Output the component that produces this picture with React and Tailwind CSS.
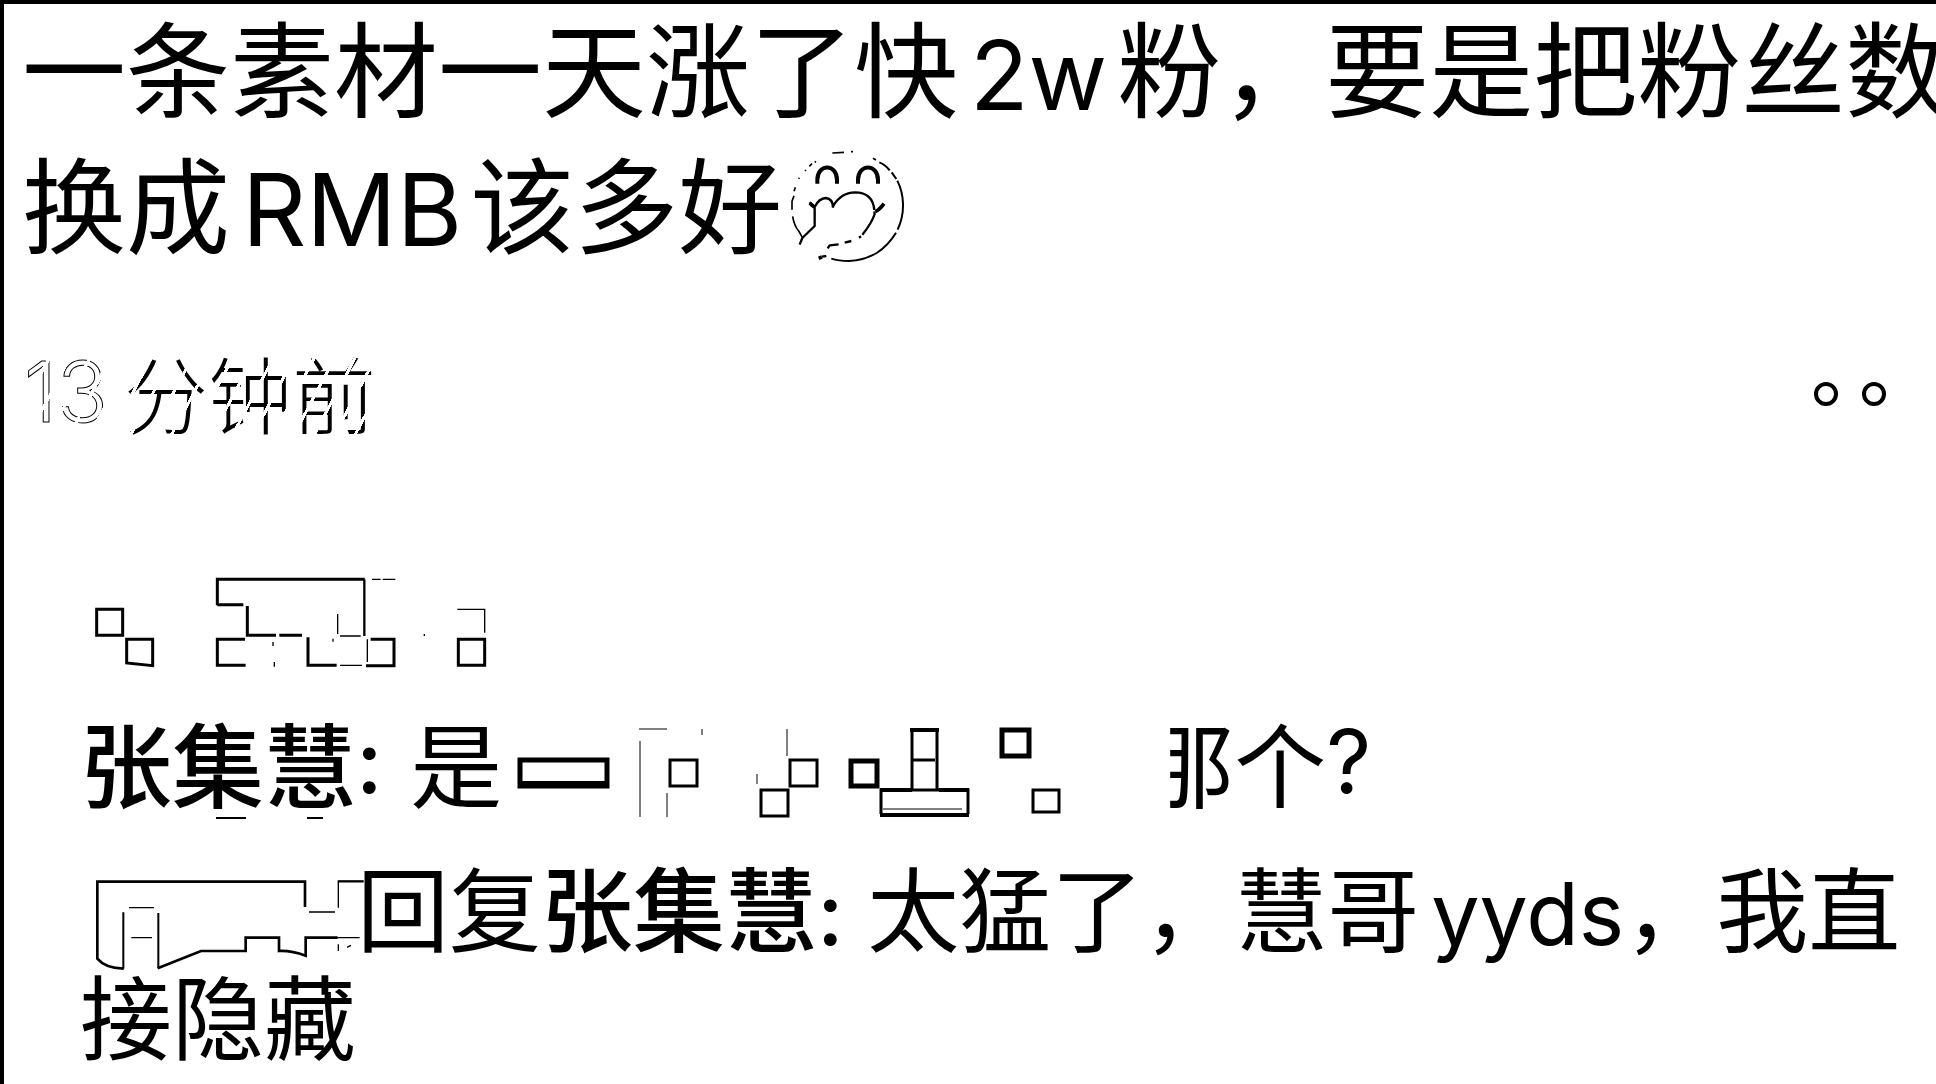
const CJK = "font-['Noto_Sans_CJK_SC',sans-serif]";
const LATIN = "font-['Inter','Noto_Sans_CJK_SC',sans-serif]";

function Latin({ className = "", children }) {
  return <span className={`${LATIN} ${className}`}>{children}</span>;
}

function Emoji() {
  return (
    <svg role="img" aria-label="捂嘴笑" viewBox="36 30 384 360" className="h-[120px] w-[128px] shrink-0" fill="none" stroke="black" strokeWidth="6" strokeLinejoin="round">
      <path d="M187 45 L222 43 M243 41h6 M309 61l9 5 M118 85l8-8 M134 73l4-3 M105 99l3-3 M86 122l2-3" strokeWidth="5" />
      <path d="M328 73 Q346 80 359 97 M365 103 L379 123 M382 128 Q398 160 399 198 Q400 238 383 275 M378 284 Q355 322 320 345 Q280 368 237 369 Q205 369 184 362" />
      <path d="M76 148 L72 160 M72 173 L66 190 L66 215 M68 235 Q72 262 86 279 L97 298" strokeWidth="5" />
      <path d="M142 137 V126 C142 76 201 76 201 126 V137 M264 137 V126 C264 76 324 76 324 126 V137" strokeWidth="12" />
      <path d="M119 193 L134 210 M134 207 Q147 181 167 180 Q189 182 189 209 M189 205 Q212 164 255 163 Q308 163 313 216 M313 220 L314 228 Q305 256 277 290 M273 295l-6 4" strokeWidth="7" />
      <path d="M134 208 V264 L97 300 L89 320" strokeWidth="7" />
      <path d="M119 195 L131 206 M316 221 Q328 216 342 197 M146 361 L156 357" strokeWidth="11" />
      <path d="M156 356 L169 354 M173 331 L179 322 L206 319 M224 314 L244 309" strokeWidth="7" />
    </svg>
  );
}

function AuthorMosaic() {
  return (
    <svg aria-hidden="true" viewBox="0 0 1290 360" className="h-[120px] w-[430px]" fill="none" stroke="black" strokeWidth="9">
      <path d="M50 148H128V226H50Z M140 238H218V317L140 309Z" />
      <path d="M412 136V58H854 M412 134H490 M502 138V226H588 M598 226H666 M495 238H412V316H497 M684 232V316H770 M858 317H942V238H872" />
      <path d="M853 58V228" strokeWidth="7" />
      <path d="M780 228H842 M773 222V162 M780 316H846 M862 238V306" strokeWidth="4" />
      <path d="M876 58H902 M908 58H946 M1132 148H1214V218 M1033 222v6 M579 246v12 M583 306v14 M759 236v9" strokeWidth="4" />
      <path d="M1135 238H1214V316H1135Z" />
    </svg>
  );
}

function CommentMosaic() {
  return (
    <svg aria-hidden="true" viewBox="501 712 640 108" className="h-[108px] w-[640px] shrink-0" fill="none" stroke="black" strokeWidth="3">
      <path d="M519 760H606V786H519Z" strokeWidth="5" />
      <path d="M518 784H605" strokeWidth="6" />
      <path d="M638 729H666 M639 741V817 M666 793V817 M701 729v6 M786 729V756 M756 774v10" strokeWidth="1" />
      <path d="M669 760H696V786H669Z M789 760H816V786H789Z M760 790H787V816H760Z M1032 790H1058V812H1032Z" />
      <path d="M850 761H876V786H850Z M1001 730H1028V756H1001Z" strokeWidth="5" />
      <path d="M911 789V730H936V789 M911 760H934 M880 814V790H967V814" />
      <path d="M909 730H938 M879 790H911 M938 790H968 M879 815H968" strokeWidth="4" />
      <path d="M882 809H961" strokeWidth="1" />
    </svg>
  );
}

function ReplyMosaic() {
  return (
    <svg aria-hidden="true" viewBox="57 15 831 324" className="h-[108px] w-[277px] shrink-0 overflow-visible" fill="none" stroke="black" strokeWidth="8">
      <path d="M732 168V92H109V323Q133 352 188 353 M290 352L420 300H554V260H654V300Q690 298 734 314V260H830" />
      <path d="M187 353V184 M292 352V186" strokeWidth="6" />
      <path d="M204 170H279 M211 260H273 M744 183H822 M832 170V92 M830 260H896 M832 280V300 M858 289l12-6" strokeWidth="4" />
      <path d="M830 91H908" strokeWidth="7" />
    </svg>
  );
}

export default function App() {
  return (
    <main lang="zh-CN" className={`min-h-screen w-full overflow-hidden whitespace-nowrap border-l-4 border-t-4 border-black bg-white text-black ${CJK}`}>
      <article>
        <h1 className="pl-[18px] text-[104px] leading-[122px] font-normal">
          <span className="block h-[136px]">
            一条素材一天涨了快<Latin className="ml-3 mr-2.5 text-[96px] leading-none">2w</Latin>粉，要是把粉丝数
          </span>
          <span className="flex h-[136px]">
            <span>
              换成<Latin className="ml-3 mr-2 text-[100px] leading-none">RMB</Latin>该多好
            </span>
            <span className="flex items-center">
              <Emoji />
            </span>
          </span>
        </h1>

        <div className="mt-[56px] flex h-[120px] items-center justify-between pl-5 pr-12">
          <time className="flex text-[84px] leading-[120px] font-light [mask-image:repeating-linear-gradient(118deg,black_0_15px,transparent_15px_18px)]">
            <Latin className="mr-4 text-[84px] text-transparent [-webkit-text-stroke:1px_black]">13</Latin>分钟前
          </time>
          <button type="button" aria-label="更多" className="h-[34px] w-[80px]">
            <svg viewBox="0 0 80 34" className="h-[34px] w-[80px]" fill="none" stroke="black" strokeWidth="4">
              <circle cx="18" cy="19" r="10" />
              <circle cx="66" cy="19" r="10" />
            </svg>
          </button>
        </div>

        <section aria-label="评论" className="mt-[108px] flex flex-col pl-[76px] text-[92px] leading-[98px]">
          <AuthorMosaic />
          <p className="mt-8 flex h-[108px]">
            <span className="relative">
              <span className="font-medium">张集慧</span>
              <svg aria-hidden="true" viewBox="0 0 276 4" className="absolute top-[104px] left-0 h-1 w-[276px]" stroke="black" strokeWidth="2">
                <path d="M136 2H166M227 2H243" />
              </svg>
            </span>
            <Latin className="mr-1 whitespace-pre text-[88px] font-medium">: </Latin>是<CommentMosaic />
            <span className="[clip-path:inset(0_0_0_28px)]">那</span>个<Latin className="text-[88px]">?</Latin>
          </p>
          <p className="mt-9">
            <span className="flex h-[108px]">
              <ReplyMosaic />
              <span>
                回复<span className="font-medium">张集慧</span>
                <Latin className="whitespace-pre text-[88px] leading-none font-medium">: </Latin>太猛了，慧哥<Latin className="ml-3 text-[86px] leading-none">yyds</Latin>，我直
              </span>
            </span>
            <span className="block">接隐藏</span>
          </p>
        </section>
      </article>
    </main>
  );
}
